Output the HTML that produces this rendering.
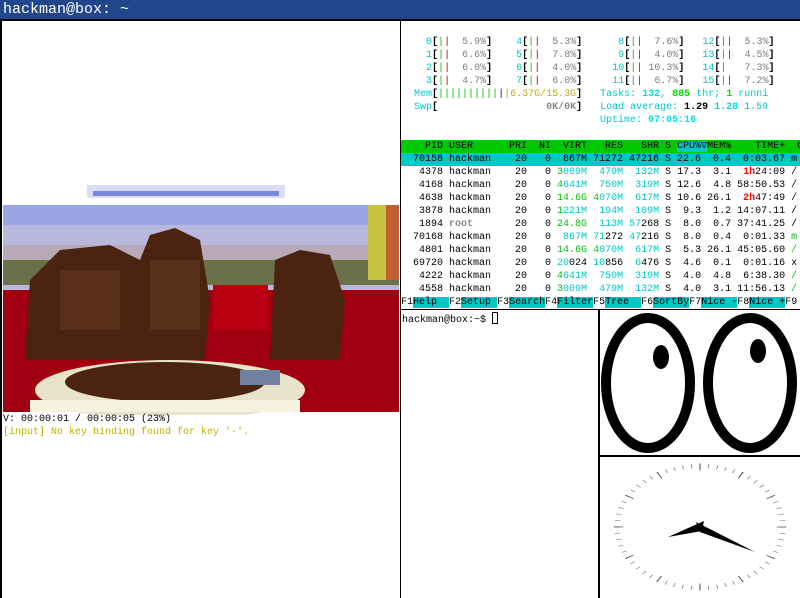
<!DOCTYPE html>
<html><head><meta charset="utf-8"><style>
*{margin:0;padding:0;box-sizing:border-box}
body{width:800px;height:598px;overflow:hidden;background:#fff;position:relative;font-family:"Liberation Mono","DejaVu Sans Mono",monospace}
.t{position:absolute;font-size:10px;line-height:13px;white-space:pre;color:#000}
.c{color:#00c8c8}.C{color:#00e0e0;font-weight:bold}.g{color:#00c000}.G{color:#00e000;font-weight:bold}.r{color:#c00000}.R{color:#f00;font-weight:bold}
.gr{color:#7f7f7f}.GR{color:#888;font-weight:bold}.y{color:#c0b000}.bl{color:#0000c0}.b{font-weight:bold}
.hd{background:#00c800}.sel{background:#00c8c8}.cb{background:#00c8c8}
.tri{display:inline-block;width:6px}
</style></head><body>
<div style="position:absolute;left:0;top:0;width:800px;height:19px;background:#21468b"></div>
<div style="position:absolute;left:0;top:19px;width:800px;height:2px;background:#000"></div>
<div style="position:absolute;left:3px;top:1px;font-size:15px;line-height:18px;color:#fff;white-space:pre">hackman@box: ~</div>
<div style="position:absolute;left:0;top:20px;width:2px;height:578px;background:#000"></div>
<div style="position:absolute;left:400px;top:20px;width:1px;height:578px;background:#000"></div>
<div style="position:absolute;left:598px;top:310px;width:2px;height:288px;background:#000"></div>
<div style="position:absolute;left:599px;top:455px;width:201px;height:2px;background:#000"></div>

<svg style="position:absolute;left:0;top:0" width="400" height="415">
<rect x="87" y="185" width="198" height="13" fill="#d8dcf4"/>
<rect x="93" y="191" width="186" height="5" fill="#7a86e0"/>
<rect x="3" y="205" width="396" height="207" fill="#b8b8dc"/>
<rect x="3" y="205" width="396" height="20" fill="#9aa6e4"/>
<rect x="3" y="245" width="396" height="15" fill="#b8a8b8"/>
<rect x="3" y="260" width="396" height="25" fill="#6a7048"/>
<rect x="368" y="205" width="22" height="75" fill="#c8c040"/>
<rect x="386" y="205" width="13" height="75" fill="#c06030"/>
<rect x="3" y="290" width="396" height="122" fill="#a00010"/>
<rect x="213" y="285" width="55" height="45" fill="#b80010"/>
<path d="M25 360 L30 280 L60 250 L110 245 L140 260 L150 235 L175 228 L200 240 L210 300 L205 360 Z" fill="#4a2410"/>
<path d="M270 360 L275 260 L300 250 L330 255 L345 300 L340 360 Z" fill="#4a2410"/>
<rect x="60" y="270" width="60" height="60" fill="#5a3018"/>
<rect x="150" y="260" width="50" height="70" fill="#583018"/>
<ellipse cx="170" cy="390" rx="135" ry="30" fill="#e8e4cc"/>
<ellipse cx="165" cy="382" rx="100" ry="20" fill="#4a2410"/>
<rect x="30" y="400" width="270" height="12" fill="#f6f2e0"/>
<rect x="240" y="370" width="40" height="15" fill="#7080a0"/>
</svg>
<div class="t" style="left:3px;top:413px">V: 00:00:01 / 00:00:05 (23%)</div>
<div class="t y" style="left:3px;top:426px">[input] No key binding found for key '-'.</div>

<div class="t" style="left:402px;top:36px">    <span class="c">0</span><span class="b">[</span><span class="g">|</span><span class="r">|</span>  <span class="gr">5.9%</span><span class="b">]</span>    <span class="c">4</span><span class="b">[</span><span class="g">|</span><span class="r">|</span>  <span class="gr">5.3%</span><span class="b">]</span>      <span class="c">8</span><span class="b">[</span><span class="g">|</span><span class="r">|</span>  <span class="gr">7.6%</span><span class="b">]</span>   <span class="c">12</span><span class="b">[</span><span class="g">|</span><span class="r">|</span>  <span class="gr">5.3%</span><span class="b">]</span>
    <span class="c">1</span><span class="b">[</span><span class="g">|</span><span class="r">|</span>  <span class="gr">6.6%</span><span class="b">]</span>    <span class="c">5</span><span class="b">[</span><span class="g">|</span><span class="r">|</span>  <span class="gr">7.8%</span><span class="b">]</span>      <span class="c">9</span><span class="b">[</span><span class="g">|</span><span class="r">|</span>  <span class="gr">4.0%</span><span class="b">]</span>   <span class="c">13</span><span class="b">[</span><span class="g">|</span><span class="r">|</span>  <span class="gr">4.5%</span><span class="b">]</span>
    <span class="c">2</span><span class="b">[</span><span class="g">|</span><span class="r">|</span>  <span class="gr">6.0%</span><span class="b">]</span>    <span class="c">6</span><span class="b">[</span><span class="g">|</span><span class="r">|</span>  <span class="gr">4.0%</span><span class="b">]</span>     <span class="c">10</span><span class="b">[</span><span class="g">|</span><span class="r">|</span> <span class="gr">10.3%</span><span class="b">]</span>   <span class="c">14</span><span class="b">[</span><span class="g">|</span>   <span class="gr">7.3%</span><span class="b">]</span>
    <span class="c">3</span><span class="b">[</span><span class="g">|</span><span class="r">|</span>  <span class="gr">4.7%</span><span class="b">]</span>    <span class="c">7</span><span class="b">[</span><span class="g">|</span><span class="r">|</span>  <span class="gr">6.0%</span><span class="b">]</span>     <span class="c">11</span><span class="b">[</span><span class="g">|</span><span class="r">|</span>  <span class="gr">6.7%</span><span class="b">]</span>   <span class="c">15</span><span class="b">[</span><span class="g">|</span><span class="r">|</span>  <span class="gr">7.2%</span><span class="b">]</span>
  <span class="c">Mem</span><span class="b">[</span><span class="g">||||||||||</span><span class="bl">|</span><span class="y">|6.37G/15.3G</span><span class="b">]</span>   <span class="c">Tasks: </span><span class="C">132</span><span class="c">, </span><span class="G">885</span><span class="c"> thr; </span><span class="G">1</span><span class="c"> runni</span>
  <span class="c">Swp</span><span class="b">[</span>                  <span class="GR">0K/0K</span><span class="b">]</span>   <span class="c">Load average: </span><span class="b">1.29 </span><span class="C">1.28 </span><span class="c">1.59</span>
                                 <span class="c">Uptime: </span><span class="C">07:05:16</span></div>

<div class="t" style="left:401px;top:140px;width:399px"><div class="hd">    PID USER      PRI  NI  VIRT   RES   SHR S <span class="cb">CPU%<span class="tri">▽</span></span>MEM%    TIME+  C</div><div class="sel">  70158 hackman    20   0  867M 71272 47216 S 22.6  0.4  0:03.67 m </div><div>   4378 hackman    20   0 <span class="g">3</span><span class="c">009M</span>  <span class="c">479M</span>  <span class="c">132M</span> S 17.3  3.1  <span class="R">1h</span>24:09 /</div><div>   4168 hackman    20   0 <span class="g">4</span><span class="c">641M</span>  <span class="c">750M</span>  <span class="c">319M</span> S 12.6  4.8 58:50.53 /</div><div>   4638 hackman    20   0 <span class="g">14.6G</span> <span class="g">4</span><span class="c">070M</span>  <span class="c">617M</span> S 10.6 26.1  <span class="R">2h</span>47:49 /</div><div>   3878 hackman    20   0 <span class="g">1</span><span class="c">221M</span>  <span class="c">194M</span>  <span class="c">109M</span> S  9.3  1.2 14:07.11 /</div><div>   1894 <span class="GR">root</span>       20   0 <span class="g">24.8G</span>  <span class="c">113M</span> <span class="c">57</span>268 S  8.0  0.7 37:41.25 /</div><div>  70168 hackman    20   0  <span class="c">867M</span> <span class="c">71</span>272 <span class="c">47</span>216 S  8.0  0.4  0:01.33 <span class="g">m</span></div><div>   4801 hackman    20   0 <span class="g">14.6G</span> <span class="g">4</span><span class="c">070M</span>  <span class="c">617M</span> S  5.3 26.1 45:05.60 <span class="g">/</span></div><div>  69720 hackman    20   0 <span class="c">20</span>024 <span class="c">10</span>856  <span class="c">6</span>476 S  4.6  0.1  0:01.16 x</div><div>   4222 hackman    20   0 <span class="g">4</span><span class="c">641M</span>  <span class="c">750M</span>  <span class="c">319M</span> S  4.0  4.8  6:38.30 <span class="g">/</span></div><div>   4558 hackman    20   0 <span class="g">3</span><span class="c">009M</span>  <span class="c">479M</span>  <span class="c">132M</span> S  4.0  3.1 11:56.13 <span class="g">/</span></div><div>F1<span class="cb">Help  </span>F2<span class="cb">Setup </span>F3<span class="cb">Search</span>F4<span class="cb">Filter</span>F5<span class="cb">Tree  </span>F6<span class="cb">SortBy</span>F7<span class="cb">Nice -</span>F8<span class="cb">Nice +</span>F9</div></div>
<div style="position:absolute;left:401px;top:309px;width:399px;height:1px;background:#000"></div>
<div class="t" style="left:402px;top:312px">hackman@box:~$ <span style="display:inline-block;width:6px;height:12px;border:1px solid #000;vertical-align:-2px"></span></div>

<svg style="position:absolute;left:0;top:0" width="800" height="598">
<ellipse cx="648" cy="383" rx="42" ry="65" fill="#fff" stroke="#000" stroke-width="10"/>
<ellipse cx="750" cy="383" rx="42" ry="65" fill="#fff" stroke="#000" stroke-width="10"/>
<ellipse cx="661" cy="357" rx="8" ry="12" fill="#000"/>
<ellipse cx="758" cy="351" rx="8" ry="12" fill="#000"/>
<g transform="translate(700,527) scale(1.36,1)">
<circle r="61" fill="none" stroke="#777" stroke-width="4" stroke-dasharray="0.6 5.788" transform="rotate(-90.3)"/>
<circle r="60" fill="none" stroke="#555" stroke-width="7" stroke-dasharray="0.8 30.616" transform="rotate(-90.4)"/>
</g>
<polygon points="704,521 668,537 702,531" fill="#000"/>
<polygon points="696,522 755,552 700,532" fill="#000"/>
</svg>
</body></html>
